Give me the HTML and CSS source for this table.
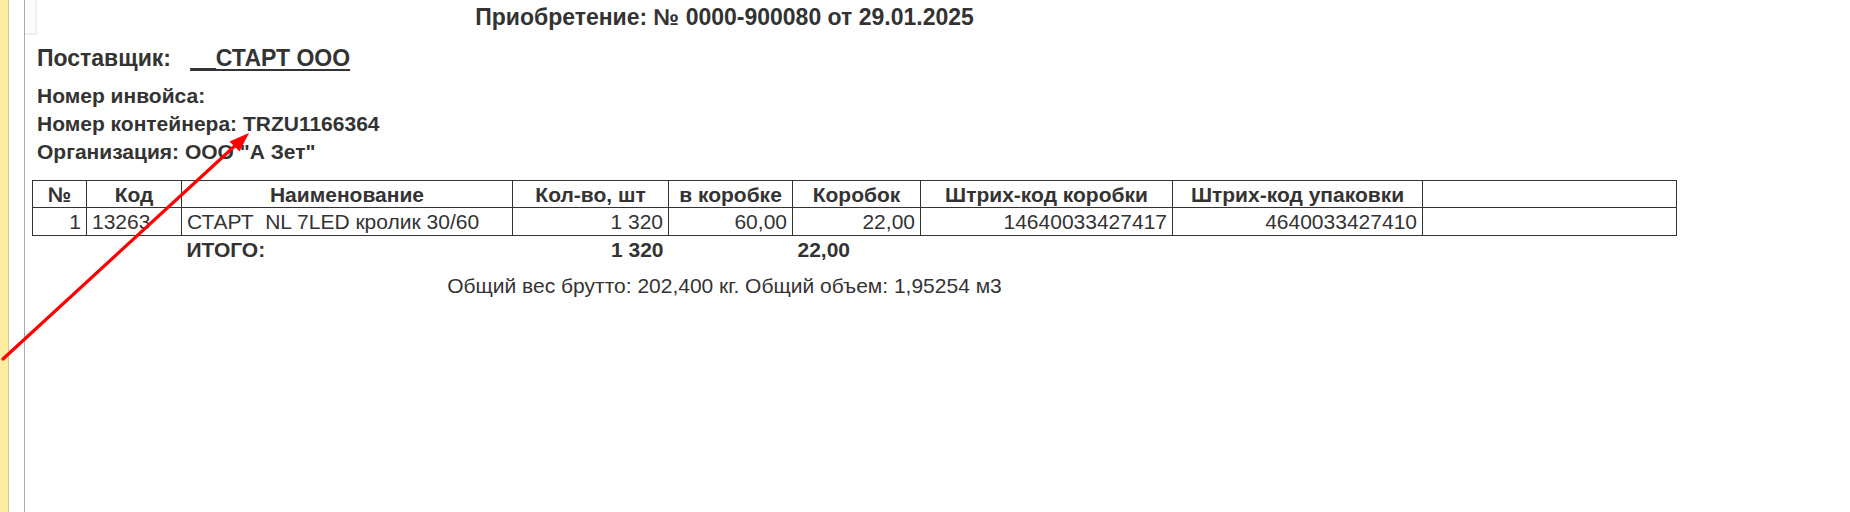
FILE: index.html
```html
<!DOCTYPE html>
<html lang="ru">
<head>
<meta charset="utf-8">
<title>Приобретение</title>
<link rel="stylesheet" href="styles.css">
</head>
<body>
<div class="app">
  <div class="sidebar"></div>
  <div class="gutter"></div>
  <div class="doc">
    <div class="corner"></div>
    <div class="title">Приобретение: № 0000-900080 от 29.01.2025</div>
    <div class="supplier">Поставщик:&nbsp;&nbsp; <span class="supplier-name">__СТАРТ ООО</span></div>
    <div class="info">
      <div class="info-line">Номер инвойса:</div>
      <div class="info-line">Номер контейнера: TRZU1166364</div>
      <div class="info-line">Организация: ООО "А Зет"</div>
    </div>
    <table class="grid">
      <colgroup>
        <col class="c-num"><col class="c-code"><col class="c-name"><col class="c-qty"><col class="c-inbox"><col class="c-boxes"><col class="c-bc1"><col class="c-bc2"><col class="c-empty">
      </colgroup>
      <thead>
        <tr>
          <th>№</th><th>Код</th><th>Наименование</th><th>Кол-во, шт</th><th>в коробке</th><th>Коробок</th><th>Штрих-код коробки</th><th>Штрих-код упаковки</th><th></th>
        </tr>
      </thead>
      <tbody>
        <tr>
          <td class="r">1</td><td>13263</td><td class="pre">СТАРТ  NL 7LED кролик 30/60</td><td class="r">1 320</td><td class="r">60,00</td><td class="r">22,00</td><td class="r">14640033427417</td><td class="r">4640033427410</td><td></td>
        </tr>
        <tr class="total">
          <td></td><td></td><td>ИТОГО:</td><td class="r">1 320</td><td></td><td>22,00</td><td></td><td></td><td></td>
        </tr>
      </tbody>
    </table>
    <div class="weight">Общий вес брутто: 202,400 кг. Общий объем: 1,95254 м3</div>
  </div>
</div>
<svg class="arrow" width="1850" height="512" viewBox="0 0 1850 512" xmlns="http://www.w3.org/2000/svg">
  <line x1="3" y1="359" x2="238" y2="143" stroke="#ff0000" stroke-width="3.2" stroke-linecap="round"/>
  <polygon points="249,133 239.5,151.5 229.5,141.5" fill="#ff0000"/>
</svg>
</body>
</html>
```

FILE: styles.css
```css
html, body {
  margin: 0;
  padding: 0;
  background: #ffffff;
}

body {
  font-family: "Liberation Sans", Arial, sans-serif;
  color: #333333;
  width: 1850px;
  height: 512px;
  overflow: hidden;
  position: relative;
}

.app {
  display: flex;
  height: 512px;
}

.sidebar {
  width: 8px;
  background: #fcec9f;
  border-right: 1px solid #d9c888;
  flex: none;
}

.gutter {
  width: 15px;
  flex: none;
  background: #ffffff;
}

.doc {
  flex: 1;
  border-left: 1px solid #a9a9a9;
  padding: 3px 0 0 7px;
  position: relative;
}

.corner {
  position: absolute;
  left: 0;
  top: 0;
  width: 10px;
  height: 33px;
  background: #fcfcfc;
  border-right: 2px solid #eeeeee;
  border-bottom: 2px solid #eeeeee;
}

.title {
  width: 1385px;
  text-align: center;
  font-weight: bold;
  font-size: 23px;
  line-height: 28px;
}

.supplier {
  margin-top: 13px;
  padding-left: 5px;
  font-weight: bold;
  font-size: 23px;
  line-height: 28px;
}

.supplier-name {
  text-decoration: underline;
  text-decoration-thickness: 2px;
  text-underline-offset: 3px;
}

.info {
  margin-top: 10px;
  padding-left: 5px;
  font-weight: bold;
  font-size: 21px;
  line-height: 28px;
}

.grid {
  margin-top: 14px;
  border-collapse: collapse;
  table-layout: fixed;
  width: 1644px;
  font-size: 21px;
}

.c-num { width: 54px; }
.c-code { width: 95px; }
.c-name { width: 331px; }
.c-qty { width: 156px; }
.c-inbox { width: 124px; }
.c-boxes { width: 128px; }
.c-bc1 { width: 252px; }
.c-bc2 { width: 250px; }
.c-empty { width: 254px; }

.grid th,
.grid td {
  border: 1px solid #333333;
  padding: 0 5px;
  white-space: nowrap;
  overflow: hidden;
}

.grid th {
  font-weight: bold;
  text-align: center;
  padding-top: 2px;
  line-height: 24px;
}

.grid td {
  text-align: left;
  line-height: 27px;
}

.grid td.r {
  text-align: right;
}

.grid td.pre {
  white-space: pre;
}

.grid tr.total td {
  border: none;
  font-weight: bold;
  line-height: 28px;
}

.weight {
  width: 1385px;
  margin-top: 8px;
  text-align: center;
  font-size: 21px;
  line-height: 28px;
}

.arrow {
  position: absolute;
  left: 0;
  top: 0;
  pointer-events: none;
}
```
